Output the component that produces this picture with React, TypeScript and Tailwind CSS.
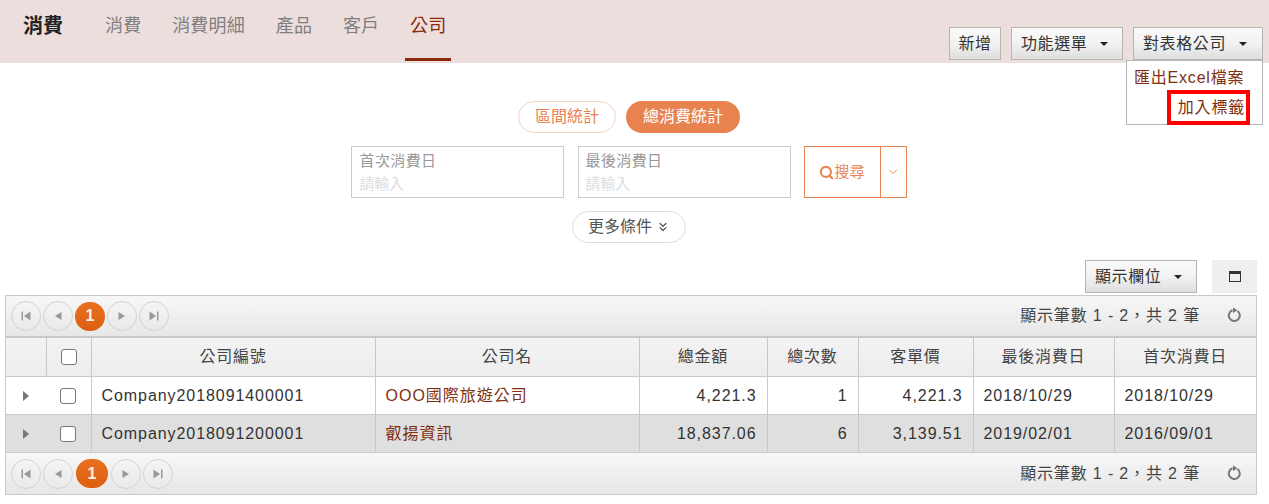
import { ChevronDown, ChevronsDown, Search } from 'lucide-react';

const FONT = 'font-["Liberation_Sans","Noto_Sans_CJK_TC",sans-serif]';

const tabs = ['消費', '消費明細', '產品', '客戶', '公司'];

const rows = [
  {
    id: 'Company2018091400001',
    name: 'OOO國際旅遊公司',
    total: '4,221.3',
    count: '1',
    avg: '4,221.3',
    last: '2018/10/29',
    first: '2018/10/29',
  },
  {
    id: 'Company2018091200001',
    name: '叡揚資訊',
    total: '18,837.06',
    count: '6',
    avg: '3,139.51',
    last: '2019/02/01',
    first: '2016/09/01',
  },
];

function GrayButton({ label, caret, className }: { label: string; caret?: boolean; className: string }) {
  return (
    <button
      className={`h-[33px] flex items-center border border-[#b5b5b5] bg-gradient-to-b from-[#fafafa] via-[#f2f2f2] to-[#dedede] text-[16px] tracking-[0.6px] text-[#333] ${
        caret ? 'pl-[9px]' : 'justify-center'
      } ${className}`}
    >
      {label}
      {caret && (
        <span className="ml-[13px] w-0 h-0 border-x-[4px] border-x-transparent border-t-[4px] border-t-[#222]" />
      )}
    </button>
  );
}

function Pager({ wide }: { wide?: boolean }) {
  const Btn = ({ d }: { d: string }) => (
    <span className="w-[30px] h-[30px] rounded-full border border-[#d2d2d2] flex items-center justify-center">
      <svg width="14" height="14" viewBox="0 0 14 14" fill="#999">
        <path d={d} />
      </svg>
    </span>
  );
  return (
    <div className="flex items-center gap-[2px]">
      <Btn d="M2.500 2.500h1.500v9H2.500zM11.500 2.500v9L5 7z" />
      <Btn d="M10.500 3v8L4 7z" />
      <span
        className={`${wide ? 'w-[32px] mx-[1px]' : 'w-[30px]'} h-[29px] rounded-full bg-gradient-to-b from-[#e8701f] to-[#de5f10] text-white/90 font-bold text-[16px] flex items-center justify-center`}
      >
        1
      </span>
      <Btn d="M3.500 3v8L10 7z" />
      <Btn d="M2.500 2.500v9L9 7zM10 2.500h1.500v9H10z" />
    </div>
  );
}

function TableBar({ wide, className }: { wide?: boolean; className: string }) {
  return (
    <div
      className={`flex items-center justify-between pl-[5px] pr-[14px] bg-gradient-to-b from-[#f7f7f7] to-[#e7e7e7] ${className}`}
    >
      <Pager wide={wide} />
      <div className="flex items-center">
        <span className="text-[16px] tracking-[0.85px] text-[#444]">顯示筆數 1 - 2，共 2 筆</span>
        <svg width="15" height="15" viewBox="0 0 15 15" className="ml-[27px] -mt-[3px]">
          <path d="M10.500 4A5.500 5.500 0 1 1 5.500 3.300" fill="none" stroke="#777" strokeWidth="2" />
          <path d="M6 0.500 10.500 3.300 6 6.100z" fill="#777" />
        </svg>
      </div>
    </div>
  );
}

export default function App() {
  const th = 'font-normal border-r border-[#c9c9c9] text-center text-[16px] tracking-[0.75px] text-[#444]';
  const td = 'border-r border-[#c9c9c9] text-[16px] tracking-[0.93px] px-[10px] pt-[2px]';
  const checkbox =
    'block mx-auto w-[16px] h-[16px] appearance-none rounded-[3px] border border-[#777] bg-white';

  return (
    <div className={`${FONT} w-[1269px] h-[504px] overflow-hidden bg-white`}>
      {/* Header */}
      <header className="h-[63px] bg-[#ecdedd] flex justify-between pl-[23px] pr-[6px]">
        <div className="flex">
          <div className="text-[20px] font-bold text-[#222] leading-[24px] pt-[14px] mr-[37px]">消費</div>
          <nav className="flex gap-[20.75px]">
            {tabs.map((t) => (
              <div
                key={t}
                className={`px-[5px] h-[61px] pt-[14px] text-[18px] leading-[24px] tracking-[0.2px] ${
                  t === '公司' ? 'border-b-[3px] border-[#8c2a0f] text-[#8c2a0f]' : 'text-[#7f7f7f]'
                }`}
              >
                {t}
              </div>
            ))}
          </nav>
        </div>
        <div className="flex gap-[10px] pt-[27px]">
          <GrayButton label="新增" className="w-[52px]" />
          <GrayButton label="功能選單" caret className="w-[112px]" />
          <div className="relative">
            <GrayButton label="對表格公司" caret className="w-[130px]" />
            <div className="absolute right-0 top-[33px] w-[137px] h-[65px] bg-white border border-[#b5b5b5] z-10 text-[16px] tracking-[0.8px] text-[#80300f]">
              <div className="pl-[7px] pt-[5px] leading-[24px] whitespace-nowrap">匯出Excel檔案</div>
              <div className="absolute right-[12px] top-[29px] w-[83px] h-[35px] border-[4px] border-[#f00] flex items-center justify-end pr-[1px] whitespace-nowrap">
                加入標籤
              </div>
            </div>
          </div>
        </div>
      </header>

      {/* Search */}
      <div className="flex justify-center gap-[10px] pt-[38px] pr-[11px]">
        <button className="w-[98px] h-[32px] rounded-full border border-[#f3d3c4] text-[#e8834f] text-[16px]">
          區間統計
        </button>
        <button className="w-[114px] h-[32px] rounded-full bg-[#e8834f] text-white text-[16px]">
          總消費統計
        </button>
      </div>
      <div className="flex justify-center pt-[13px] pr-[12px]">
        <div className="w-[213px] h-[52px] border border-[#ccc] pl-[8px] pt-[4px] mr-[14px]">
          <div className="text-[15px] leading-[20px] text-[#999] tracking-[0.4px]">首次消費日</div>
          <div className="text-[15px] leading-[26px] text-[#ddd] -tracking-[0.3px]">請輸入</div>
        </div>
        <div className="w-[213px] h-[52px] border border-[#ccc] pl-[7px] pt-[4px] mr-[13px]">
          <div className="text-[15px] leading-[20px] text-[#999] tracking-[0.4px]">最後消費日</div>
          <div className="text-[15px] leading-[26px] text-[#ddd] -tracking-[0.3px]">請輸入</div>
        </div>
        <div className="flex h-[52px] border border-[#e8834f] text-[#e8834f]">
          <div className="w-[76px] flex items-center justify-center text-[15px] border-r border-[#e8834f]">
            <Search className="w-[15px] h-[15px]" strokeWidth={3.4} />
            搜尋
          </div>
          <div className="w-[25px] flex items-center justify-center">
            <ChevronDown className="w-[14px] h-[14px]" strokeWidth={1.6} />
          </div>
        </div>
      </div>
      <div className="flex justify-center pt-[13px] pr-[11px]">
        <button className="w-[114px] h-[32px] rounded-full border border-[#dedede] text-[#555] text-[16px] flex items-center justify-center">
          更多條件
          <ChevronsDown className="w-[14px] h-[14px] ml-[4px]" strokeWidth={2.2} />
        </button>
      </div>

      {/* Table toolbar */}
      <div className="flex justify-end items-start gap-[15px] pt-[17px] pr-[12px] h-[52px]">
        <GrayButton label="顯示欄位" caret className="w-[112px]" />
        <div className="w-[45px] h-[33px] bg-[#efefef] flex items-center justify-center">
          <span className="w-[12px] h-[11px] border border-[#333] border-t-[3px]" />
        </div>
      </div>

      {/* Table */}
      <div className="ml-[5px] w-[1252px] border border-[#c9c9c9]">
        <TableBar className="h-[40px]" />
        <table className="w-[1250px] table-fixed border-collapse border-t-2 border-[#c9c9c9]">
          <colgroup>
            <col className="w-[40px]" />
            <col className="w-[45px]" />
            <col className="w-[284px]" />
            <col className="w-[264px]" />
            <col className="w-[128px]" />
            <col className="w-[91px]" />
            <col className="w-[115px]" />
            <col className="w-[141px]" />
            <col className="w-[142px]" />
          </colgroup>
          <thead>
            <tr className="h-[39px] bg-gradient-to-b from-[#f3f3f3] to-[#ededed]">
              <th className={th} />
              <th className={th}>
                <input type="checkbox" className={checkbox} />
              </th>
              <th className={th}>公司編號</th>
              <th className={th}>公司名</th>
              <th className={th}>總金額</th>
              <th className={th}>總次數</th>
              <th className={th}>客單價</th>
              <th className={th}>最後消費日</th>
              <th className={`${th} border-r-0`}>首次消費日</th>
            </tr>
          </thead>
          <tbody>
            {rows.map((r, i) => (
              <tr
                key={r.id}
                className={`h-[38px] border-t border-[#c9c9c9] text-[#333] ${i === 1 ? 'bg-[#dfdfdf]' : 'bg-white'}`}
              >
                <td className="pl-[17px] pt-[2px]">
                  <span className="block w-0 h-0 border-y-[5px] border-y-transparent border-l-[6px] border-l-[#777]" />
                </td>
                <td className="border-r border-[#c9c9c9] pt-[2px]">
                  <input type="checkbox" className={checkbox} />
                </td>
                <td className={td}>{r.id}</td>
                <td className="border-r border-[#c9c9c9] text-[16px] tracking-[1px] px-[10px] pt-[2px] text-[#80300f]">
                  {r.name}
                </td>
                <td className={`${td} text-right`}>{r.total}</td>
                <td className={`${td} text-right`}>{r.count}</td>
                <td className={`${td} text-right`}>{r.avg}</td>
                <td className={td}>{r.last}</td>
                <td className={`${td} border-r-0`}>{r.first}</td>
              </tr>
            ))}
          </tbody>
        </table>
        <div className="border-t border-[#c9c9c9]">
          <TableBar wide className="h-[41px]" />
        </div>
      </div>
    </div>
  );
}
